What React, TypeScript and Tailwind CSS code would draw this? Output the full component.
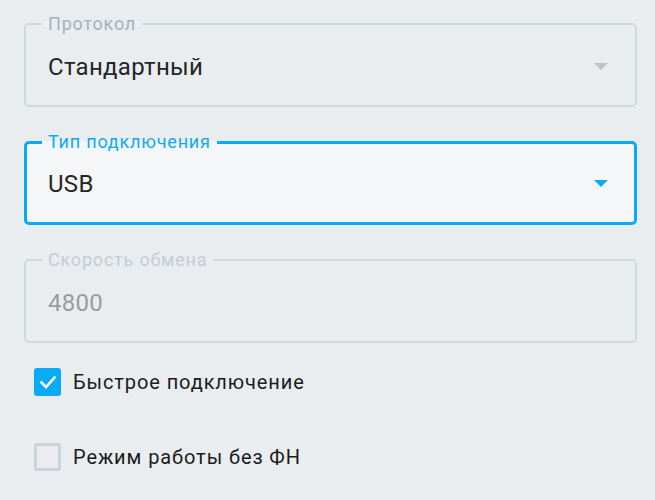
import React from 'react';

const Arrow = ({ color }: { color: string }) => (
  <svg width="14" height="7" viewBox="0 0 14 7" className="shrink-0">
    <path d="M0 0 L14 0 L7 7 Z" fill={color} />
  </svg>
);

type FieldProps = {
  label: string;
  value: string;
  focused?: boolean;
  disabled?: boolean;
  arrow?: boolean;
};

const Field = ({ label, value, focused, disabled, arrow }: FieldProps) => {
  const box = focused
    ? 'border-[3px] border-[#0aabf5] bg-[#f4f6f8] pl-[15px] pr-[26px]'
    : 'border-2 border-[#d2d9dd] pl-[16px] pr-[27px]';
  const labelColor = focused ? 'text-[#0aabf5]' : disabled ? 'text-[#c3ced4]' : 'text-[#a2b3bc]';
  const valueColor = disabled ? 'text-[#9c9c9c]' : 'text-[#262626]';
  return (
    <fieldset className={`rounded-[5px] ${box} pb-[5px] min-w-0`}>
      <legend className={`px-[6px] text-[18px] leading-[20px] tracking-[0.8px] ${labelColor}`}>{label}</legend>
      <div className={`flex h-[66px] items-center pl-[6px] ${focused ? '-mt-px h-[65px]' : ''}`}>
        <span className={`text-[24px] leading-[28px] tracking-[0.3px] ${valueColor}`}>{value}</span>
        {arrow && (
          <div className="ml-auto -mt-[2px]">
            <Arrow color={focused ? '#0aabf5' : '#b9c6cc'} />
          </div>
        )}
      </div>
    </fieldset>
  );
};

const Check = ({ checked, label }: { checked?: boolean; label: string }) => (
  <div className="flex items-center gap-3 pl-[10px] h-[28px]">
    {checked ? (
      <div className="flex h-[28px] w-[27px] items-center justify-center rounded-[3px] bg-[#0aabf5]">
        <svg width="20" height="20" viewBox="0 0 20 20">
          <path d="M3.5 10.5 L8 15 L16.5 5.5" fill="none" stroke="white" strokeWidth="2.6" strokeLinecap="square" />
        </svg>
      </div>
    ) : (
      <div className="h-[28px] w-[27px] rounded-[3px] border-[3px] border-[#c9d3d9]" />
    )}
    <span className="text-[20px] leading-[24px] tracking-[0.9px] text-[#1c1c1c]">{label}</span>
  </div>
);

export default function App() {
  return (
    <div
      className="min-h-[500px] w-[655px] bg-[#e9edf0] pl-[24px] pr-[18px] pt-[14px]"
      style={{ fontFamily: 'Roboto, "Noto Sans", sans-serif' }}
    >
      <div className="flex flex-col gap-[25px]">
        <Field label="Протокол" value="Стандартный" arrow />
        <Field label="Тип подключения" value="USB" focused arrow />
        <Field label="Скорость обмена" value="4800" disabled />
      </div>
      <div className="mt-[25px] flex flex-col gap-[47px]">
        <Check checked label="Быстрое подключение" />
        <Check label="Режим работы без ФН" />
      </div>
    </div>
  );
}
